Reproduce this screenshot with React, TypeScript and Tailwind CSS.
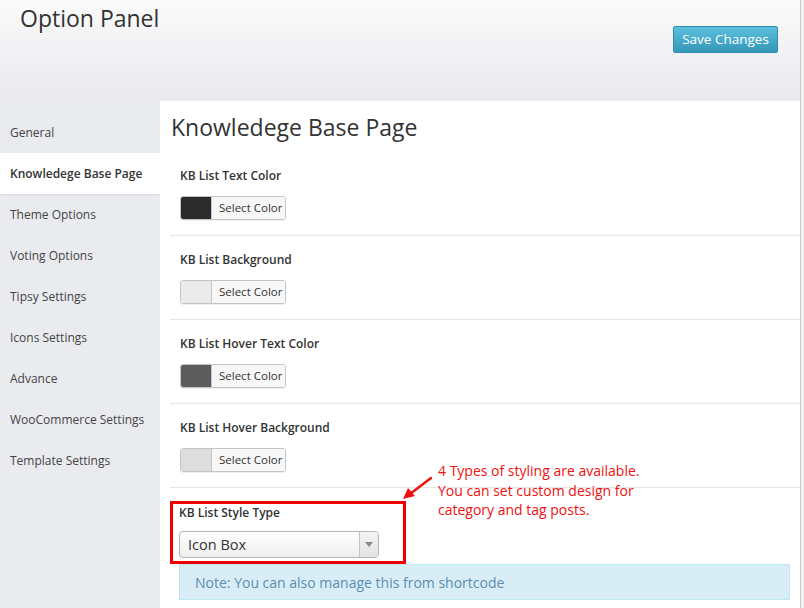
const menu = [
  "General",
  "Knowledege Base Page",
  "Theme Options",
  "Voting Options",
  "Tipsy Settings",
  "Icons Settings",
  "Advance",
  "WooCommerce Settings",
  "Template Settings",
];

const colorFields = [
  { label: "KB List Text Color", swatch: "bg-[#2b2b2b]" },
  { label: "KB List Background", swatch: "bg-[#ebebeb]" },
  { label: "KB List Hover Text Color", swatch: "bg-[#5c5c5c]" },
  { label: "KB List Hover Background", swatch: "bg-[#dddddd]" },
];

function ColorPicker({ swatch }: { swatch: string }) {
  return (
    <div className="flex h-[24px] w-[106px] overflow-hidden rounded-[3px] border border-[#c4c4c4] shadow-[0_1px_0_rgba(0,0,0,0.06)]">
      <div className={`w-[31px] border-r border-[#c4c4c4] ${swatch}`} />
      <div className="flex flex-1 items-center bg-[#f7f7f7] pl-[7px] text-[11.5px] text-[#333]">Select Color</div>
    </div>
  );
}

export default function App() {
  return (
    <div className="flex h-[608px] w-[804px] overflow-hidden bg-[#f1f1f1] font-['Open_Sans',sans-serif]">
      <div className="flex w-[801px] flex-col border-r border-[#c8c8c8]">
        {/* Header */}
        <header className="flex h-[101px] shrink-0 items-start justify-between bg-gradient-to-b from-[#fbfbfb] to-[#e8e9ed] pl-[20px] pr-[22px]">
          <h1 className="pt-[2px] text-[23px] leading-[33px] text-[#333]">Option Panel</h1>
          <button className="mt-[26px] h-[27px] w-[105px] rounded-[2px] border border-[#2f8fae] bg-gradient-to-b from-[#5cc0de] to-[#3397b8] text-[13.5px] text-white">
            Save Changes
          </button>
        </header>

        <div className="flex flex-1">
          {/* Sidebar */}
          <nav className="w-[160px] shrink-0 bg-[#e9ebef] pt-[11px]">
            {menu.map((item, i) => (
              <div
                key={item}
                className={
                  i === 1
                    ? "flex h-[41px] items-center bg-white pl-[10px] text-[12px] font-semibold text-[#333] shadow-[0_1px_2px_rgba(0,0,0,0.08)]"
                    : "flex h-[41px] items-center pl-[10px] text-[12px] text-[#444]"
                }
              >
                {item}
              </div>
            ))}
          </nav>

          {/* Main */}
          <main className="relative flex-1 bg-white pl-[10px] pr-[10px]">
            <h2 className="h-[51px] pl-[1px] pt-[10px] text-[23px] leading-[33px] text-[#333]">Knowledege Base Page</h2>

            {colorFields.map((f) => (
              <section key={f.label} className="-mr-[10px] border-b border-[#e6e6e6] pb-[15px] pl-[10px] pt-[15px]">
                <div className="mb-[11px] text-[12px] font-semibold leading-[18px] text-[#333]">{f.label}</div>
                <ColorPicker swatch={f.swatch} />
              </section>
            ))}

            <section className="pt-[13px]">
              <div className="h-[63px] w-[236px] border-[3px] border-[#ee0000] pl-[6px]">
                <div className="pt-[1px] text-[12px] font-semibold leading-[16px] text-[#333]">KB List Style Type</div>
                <div className="mt-[10px] flex h-[27px] w-[200px] overflow-hidden rounded-[4px] border border-[#b4b4b4] bg-gradient-to-b from-white to-[#eeeeee]">
                  <div className="flex flex-1 items-center pl-[8px] text-[14.5px] text-[#333]">Icon Box</div>
                  <div className="flex w-[19px] items-center justify-center border-l border-[#c4c4c4] bg-gradient-to-b from-[#f4f4f4] to-[#e2e2e2]">
                    <span className="block h-0 w-0 border-x-[4px] border-t-[5px] border-x-transparent border-t-[#888]" />
                  </div>
                </div>
              </div>
              <div className="ml-[9px] flex h-[36px] items-center border border-[#bce8f1] bg-[#d9edf7] pl-[15px] text-[14px] text-[#5a8db0]">
                Note: You can also manage this from shortcode
              </div>
            </section>

            {/* Annotation */}
            <div className="absolute left-[278px] top-[360px] text-[14px] leading-[19.5px] text-[#ee1111]">
              <p>4 Types of styling are available.</p>
              <p>You can set custom design for</p>
              <p>category and tag posts.</p>
            </div>
            <svg className="absolute left-[240px] top-[374px]" width="36" height="26" viewBox="0 0 36 26">
              <line x1="31" y1="3" x2="10" y2="19" stroke="#ee1111" strokeWidth="2.5" strokeLinecap="round" />
              <polygon points="3,24 8,13 15,21" fill="#ee1111" />
            </svg>
          </main>
        </div>
      </div>
    </div>
  );
}
